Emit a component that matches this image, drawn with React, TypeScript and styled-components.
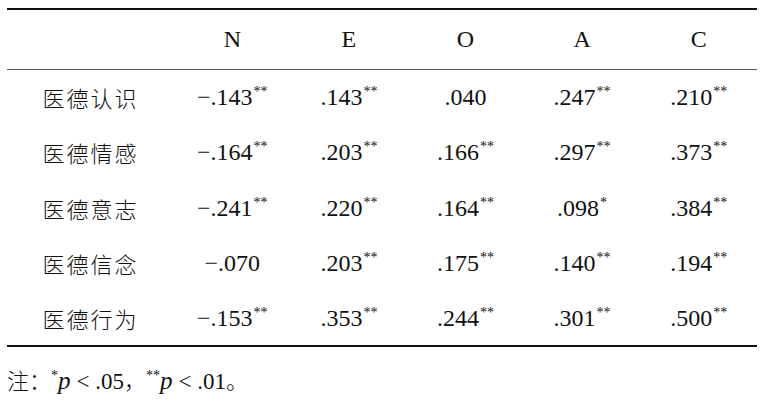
import React from "react";
import styled, { createGlobalStyle } from "styled-components";

const Global = createGlobalStyle`
  html, body { margin: 0; padding: 0; background: #fff; }
  body { font-family: "Liberation Serif", "Times New Roman", "Noto Sans CJK SC", serif; color: #111; }
`;

const Page = styled.div`
  width: 760px;
  height: 401px;
  padding: 8px 3px 0 7px;
  box-sizing: border-box;
  font-family: "Liberation Serif", "Times New Roman", serif;
  color: #111;
`;

const Table = styled.table`
  width: 750px;
  border-collapse: collapse;
  table-layout: fixed;
  border-top: 2px solid #111;
  border-bottom: 2px solid #111;
  font-family: "Liberation Serif", "Times New Roman", serif;
  font-size: 24px;
  color: #111;
`;

const HeadCell = styled.th`
  height: 59px;
  padding: 0;
  font-weight: normal;
  font-family: "Liberation Serif", "Times New Roman", serif;
  font-size: 24px;
  text-align: center;
  vertical-align: middle;
  border-bottom: 1px solid #555;
`;

const Row = styled.tr<{ $h: number }>`
  height: ${(p) => p.$h}px;
`;

const Label = styled.td`
  padding: 0;
  text-align: center;
  font-family: "Noto Sans CJK SC", sans-serif;
  font-weight: 300;
  font-size: 22px;
  letter-spacing: 2px;
  vertical-align: middle;
`;

const Cell = styled.td`
  padding: 1px 0 0 0;
  text-align: center;
  font-family: "Liberation Serif", "Times New Roman", serif;
  font-size: 24px;
  vertical-align: middle;
  white-space: nowrap;
`;

const Stars = styled.sup`
  font-size: 14px;
  line-height: 0;
  vertical-align: 9px;
  margin-left: 1px;
`;

const Note = styled.div`
  margin-top: 18px;
  font-family: "Liberation Serif", "Times New Roman", serif;
  font-size: 23px;
  line-height: 28px;
  white-space: nowrap;
`;

const Cjk = styled.span`
  font-family: "Noto Sans CJK SC", sans-serif;
  font-weight: 300;
  font-size: 22px;
`;

const NoteSup = styled.sup`
  font-size: 14px;
  line-height: 0;
  vertical-align: 9px;
`;

const Ital = styled.i`
  font-style: italic;
  font-size: 25px;
  margin-right: 6px;
`;

const cols = ["N", "E", "O", "A", "C"];
const rows: [string, string[], number][] = [
  ["医德认识", ["−.143**", ".143**", ".040", ".247**", ".210**"], 55],
  ["医德情感", ["−.164**", ".203**", ".166**", ".297**", ".373**"], 55],
  ["医德意志", ["−.241**", ".220**", ".164**", ".098*", ".384**"], 56],
  ["医德信念", ["−.070", ".203**", ".175**", ".140**", ".194**"], 55],
  ["医德行为", ["−.153**", ".353**", ".244**", ".301**", ".500**"], 55],
];

function Value({ v }: { v: string }) {
  const m = v.match(/^([^*]+)(\**)$/);
  const num = m ? m[1] : v;
  const st = m ? m[2] : "";
  return (
    <>
      {num}
      {st && <Stars>{st}</Stars>}
    </>
  );
}

export default function App() {
  return (
    <Page>
      <Global />
      <Table>
        <colgroup>
          <col style={{ width: 167 }} />
          {cols.map((c) => (
            <col key={c} style={{ width: 116.6 }} />
          ))}
        </colgroup>
        <thead>
          <tr>
            <HeadCell />
            {cols.map((c) => (
              <HeadCell key={c}>{c}</HeadCell>
            ))}
          </tr>
        </thead>
        <tbody>
          {rows.map(([label, vals, h]) => (
            <Row key={label} $h={h}>
              <Label>{label}</Label>
              {vals.map((v, i) => (
                <Cell key={i}>
                  <Value v={v} />
                </Cell>
              ))}
            </Row>
          ))}
        </tbody>
      </Table>
      <Note>
        <Cjk>注：</Cjk>
        <NoteSup>*</NoteSup>
        <Ital>p</Ital>&lt; .05<Cjk>，</Cjk>
        <NoteSup>**</NoteSup>
        <Ital>p</Ital>&lt; .01<Cjk>。</Cjk>
      </Note>
    </Page>
  );
}
